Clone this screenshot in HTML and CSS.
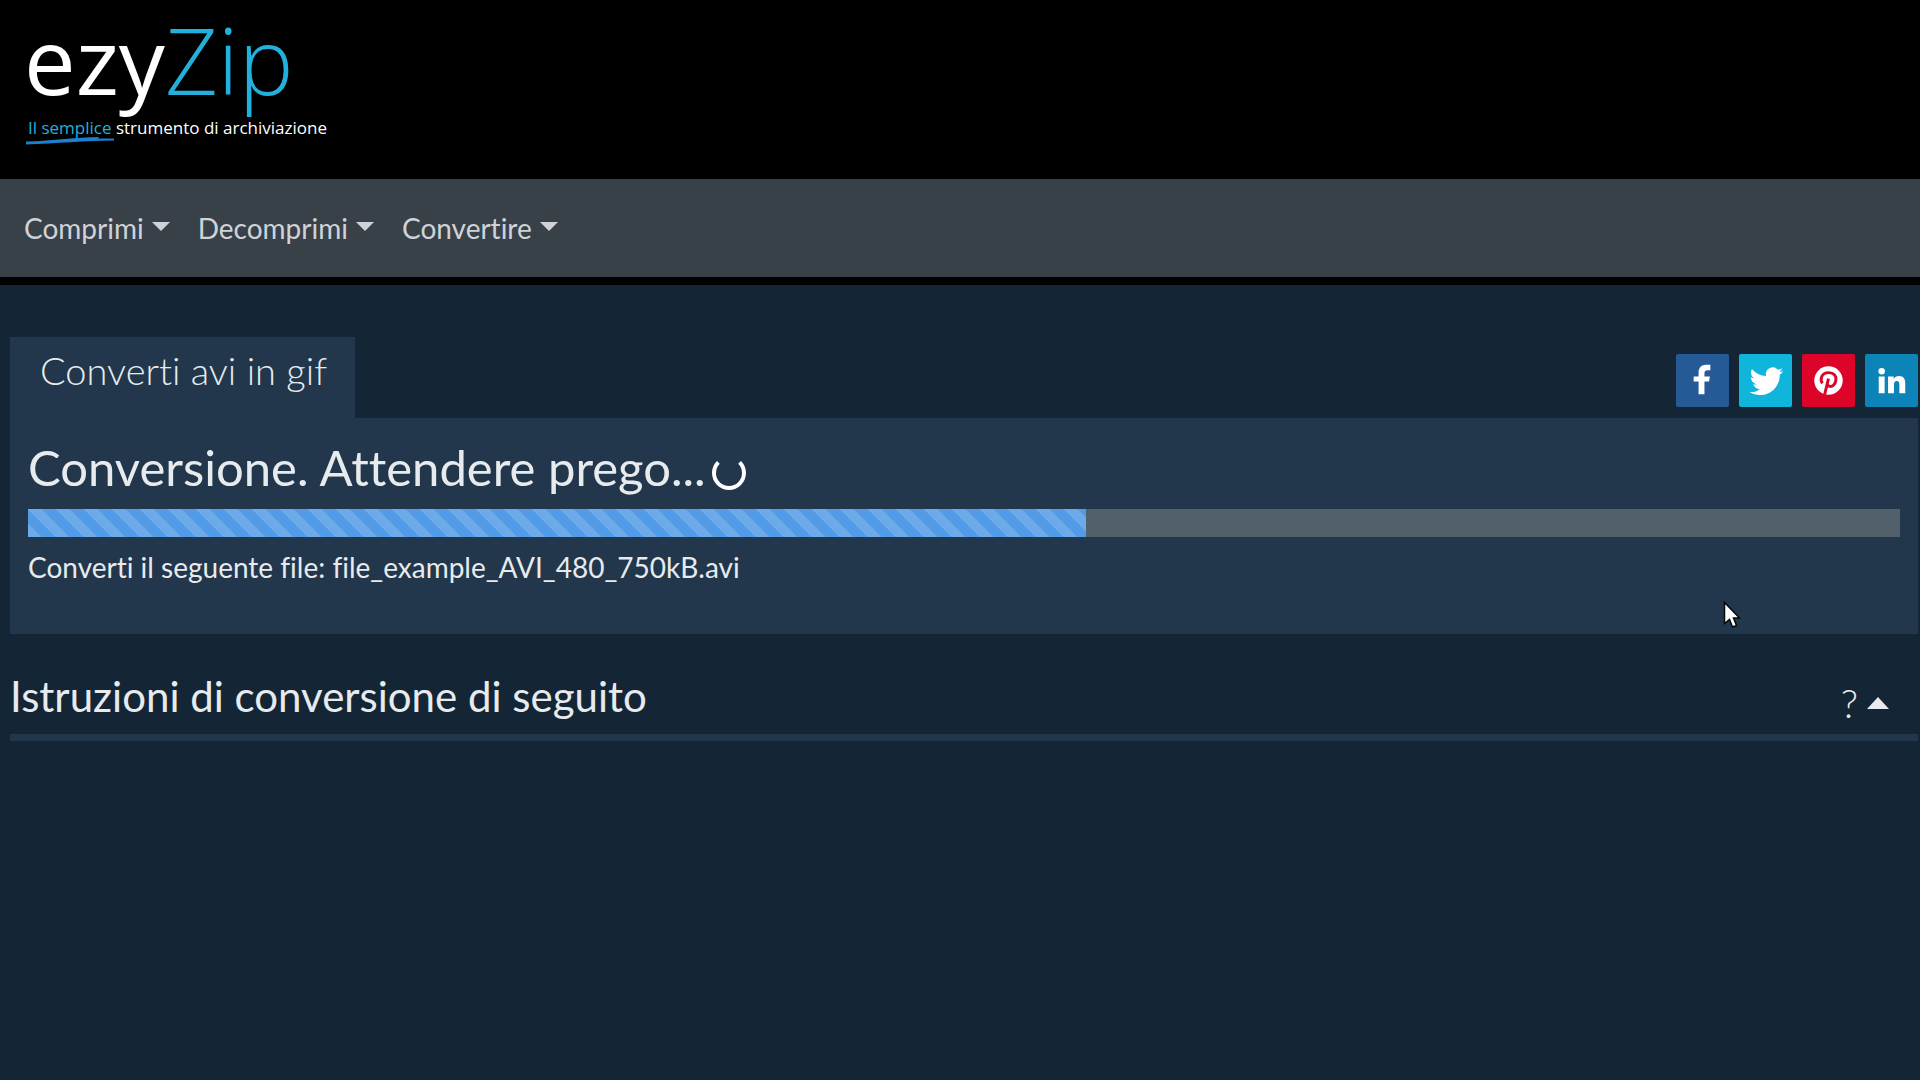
FILE: index.html
```
<!DOCTYPE html>
<html lang="it">
<head>
  <meta charset="UTF-8">
  <meta name="viewport" content="width=device-width, initial-scale=1">
  <title>ezyZip</title>
  <link rel="stylesheet" href="styles.css">
</head>
<body>
  <header class="site-header">
    <a class="logo" href="#">
      <span class="logo-name">ezy<span class="logo-zip">Zip</span></span>
      <span class="logo-tagline"><span class="logo-easy">Il semplice<svg class="logo-stroke" viewBox="0 0 88 8" preserveAspectRatio="none" aria-hidden="true"><path d="M0 4.500C28 4 50 0 73 0L72 1.500L88 1.500V3.500C60 3.500 30 6.500 0 7.500Z" fill="#1c7fd0"/></svg></span> strumento di archiviazione</span>
    </a>
  </header>

  <nav class="navbar">
    <button class="nav-link" type="button">Comprimi</button>
    <button class="nav-link" type="button">Decomprimi</button>
    <button class="nav-link" type="button">Convertire</button>
  </nav>

  <main class="content">
    <div class="tab-row">
      <h1 class="tab">Converti avi in gif</h1>
      <div class="share">
        <a class="share-link facebook" href="#" aria-label="Facebook">
          <svg viewBox="0 0 54 54"><path d="M23 41V28h-5v-5h5v-4c0-5 3-8 7.500-8H35v5.500h-3c-2 0-3 1-3 3V23h5.500l-.8 5H29v13z"/></svg>
        </a>
        <a class="share-link twitter" href="#" aria-label="Twitter">
          <svg viewBox="0 0 54 54"><path d="M45 17.200c-1.300.6-2.600.9-4 1.100 1.400-.9 2.500-2.200 3-3.800-1.300.8-2.800 1.300-4.400 1.600a7 7 0 0 0-12 6.400C21.800 22.200 16.700 19.500 13.200 15.300c-1.900 3.300-.9 7.300 2.100 9.400-1.100 0-2.200-.3-3.100-.9 0 3.500 2.300 6.300 5.600 7-1 .3-2.100.3-3.200.1.900 2.800 3.500 4.800 6.500 4.900-3 2.400-6.500 3.300-10.300 2.900 3.200 2 6.900 3.100 10.600 3.100 13 0 20.500-10.900 20.100-20.700 1.300-1 2.500-2.300 3.500-3.900z"/></svg>
        </a>
        <a class="share-link pinterest" href="#" aria-label="Pinterest">
          <svg viewBox="0 0 54 54"><circle cx="27" cy="27" r="14.500"/><path class="pin" d="M23 41.500L27 25M20.800 30c-2.800-4-1.200-11 6.400-11 5.300 0 8 3.200 7.300 7.700-.6 4.300-3.300 6.700-6 6.300-1.900-.3-2.900-1.800-2.700-3.200"/></svg>
        </a>
        <a class="share-link linkedin" href="#" aria-label="LinkedIn">
          <svg viewBox="0 0 54 54"><circle cx="17" cy="17.500" r="3.300"/><path d="M14 23h6v17h-6zM23.500 23h5.700v2.500c1-1.800 3-3 5.500-3 4.800 0 6.300 3 6.300 8V40h-6v-8.700c0-2.300-.5-3.800-2.500-3.800-2.200 0-3 1.600-3 4V40h-6z"/></svg>
        </a>
      </div>
    </div>

    <section class="panel">
      <h2 class="status">Conversione. Attendere prego...<span class="spinner"></span></h2>
      <div class="progress" role="progressbar" aria-valuenow="56" aria-valuemin="0" aria-valuemax="100" aria-label="Conversione">
        <div class="progress-bar" style="width: 56.5%"></div>
      </div>
      <p class="file">Converti il seguente file: file_example_AVI_480_750kB.avi</p>
    </section>

    <section class="instructions">
      <h2 class="instructions-title">Istruzioni di conversione di seguito</h2>
      <button class="toggle" type="button">?</button>
    </section>
  </main>

  <svg class="cursor" viewBox="0 0 18 28" aria-hidden="true"><path d="M1.500 1.500V22.500L6.500 18.500L9.500 26L13.500 24.500L10.500 17H16.500Z" fill="#fff" stroke="#05080c" stroke-width="1.500"/></svg>
</body>
</html>
```

FILE: styles.css
```
* {
  margin: 0;
  padding: 0;
  box-sizing: border-box;
}

body {
  font-family: Lato, sans-serif;
  font-size: 28px;
  font-variant-ligatures: none;
  line-height: 42px;
  background: #142635;
  color: #e8ebee;
  min-height: 100vh;
}

a {
  color: inherit;
  text-decoration: none;
}

button {
  font: inherit;
  font-variant-ligatures: none;
  color: inherit;
  background: none;
  border: none;
  cursor: pointer;
}

/* header */
.site-header {
  background: #000;
  padding: 8px 24px 36px;
}

.logo {
  display: block;
  width: fit-content;
  font-family: "Open Sans", sans-serif;
  color: #fff;
}

.logo-name {
  display: block;
  font-size: 92px;
  line-height: 104px;
}

.logo-zip {
  font-weight: 300;
  color: #22b0dc;
}

.logo-tagline {
  display: block;
  padding-left: 4px;
  font-size: 17px;
  line-height: 31px;
}

.logo-easy {
  position: relative;
  color: #22b0dc;
}

.logo-stroke {
  position: absolute;
  left: -2px;
  top: 21px;
  width: 88px;
  height: 8px;
}

/* navbar */
.navbar {
  display: flex;
  gap: 28px;
  padding: 28px 24px;
  background: #384048;
  border-bottom: 8px solid #000;
}

.nav-link {
  display: flex;
  gap: 8px;
  color: #cfd3d8;
}

.nav-link::after {
  content: "";
  margin-top: 15px;
  border: 9px solid transparent;
  border-top-color: currentColor;
  border-bottom: 0;
}

/* content */
.content {
  padding: 52px 2px 0 10px;
}

.tab-row {
  display: flex;
  justify-content: space-between;
  align-items: flex-end;
}

.tab {
  padding: 9px 28px 24px 30px;
  background: #22374b;
  font-size: 38px;
  font-weight: 300;
  line-height: 48px;
}

.share {
  display: flex;
  gap: 10px;
  padding-bottom: 11px;
}

.share-link {
  width: 53px;
  height: 53px;
  border-radius: 2px;
}

.share-link svg {
  display: block;
  fill: #fff;
}

.facebook { background: #265a96; }
.twitter { background: #10b5dc; }
.pinterest { background: #dc0428; }
.linkedin { background: #0c84b8; }

.share-link .pin {
  fill: none;
  stroke: #dc0428;
  stroke-width: 3;
}

.panel {
  padding: 20px 18px 46px;
  background: #22374b;
}

.status {
  display: flex;
  align-items: center;
  gap: 6px;
  font-size: 49px;
  font-weight: 400;
  line-height: 58px;
}

.spinner {
  width: 34px;
  height: 34px;
  margin-top: 12px;
  border: 4px solid #fff;
  border-top-color: transparent;
  border-radius: 50%;
}

.progress {
  height: 28px;
  margin: 13px 0 9px;
  background: #52606c;
}

.progress-bar {
  height: 100%;
  background-color: #529be6;
  background-image: linear-gradient(45deg, rgba(255, 255, 255, 0.15) 25%, transparent 25%, transparent 50%, rgba(255, 255, 255, 0.15) 50%, rgba(255, 255, 255, 0.15) 75%, transparent 75%, transparent);
  background-size: 28px 28px;
}

/* instructions */
.instructions {
  display: flex;
  justify-content: space-between;
  align-items: flex-end;
  margin-top: 36px;
  padding-bottom: 12px;
  border-bottom: 7px solid #22374b;
}

.instructions-title {
  font-size: 42px;
  font-weight: 400;
  line-height: 52px;
}

.toggle {
  display: flex;
  align-items: center;
  gap: 9px;
  padding-right: 29px;
  font-size: 40px;
  font-weight: 300;
  line-height: 38px;
}

.toggle::after {
  content: "";
  border: 11px solid transparent;
  border-bottom: 12px solid;
  border-top: 0;
}

.cursor {
  position: absolute;
  left: 1723px;
  top: 601px;
  width: 18px;
  height: 28px;
}
```
